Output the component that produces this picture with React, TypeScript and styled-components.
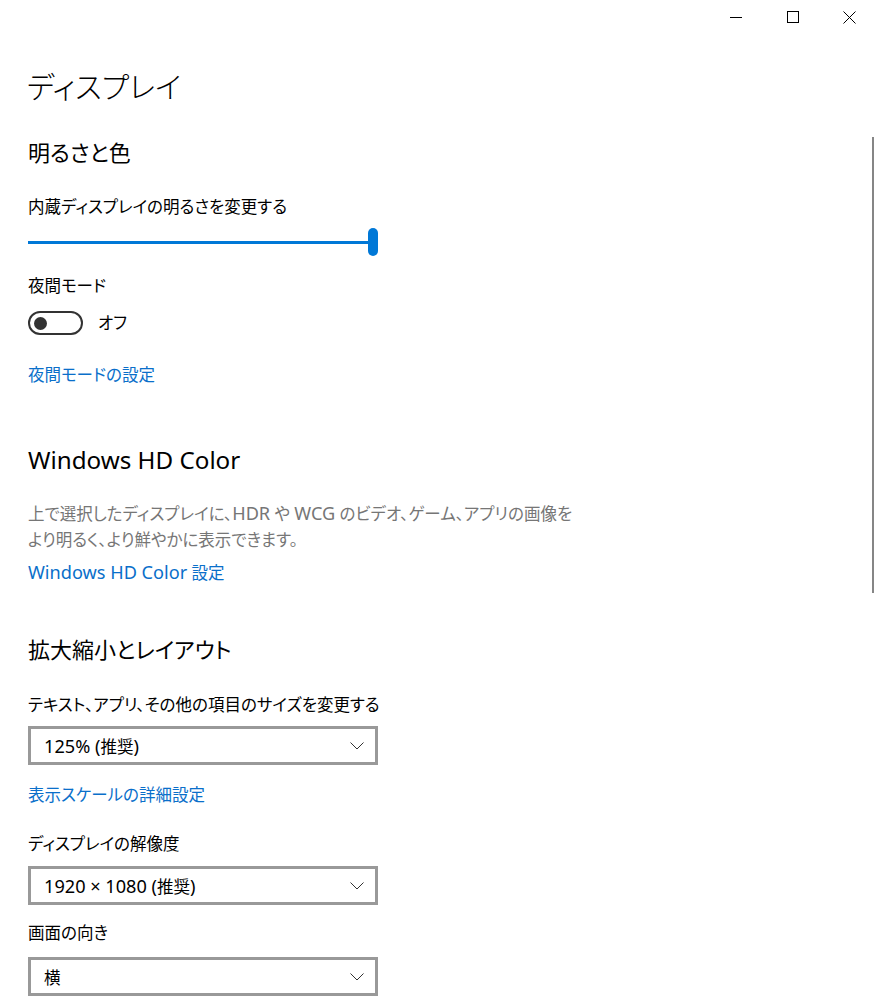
import React, { useState } from 'react';
import styled, { createGlobalStyle } from 'styled-components';

const GlobalStyle = createGlobalStyle`
    html, body {
        margin:0;
        padding:0;
        background:#fff;
    }
    body {
        font-family:"Noto Sans", "Noto Sans CJK JP", sans-serif;
        color:#000;
    }
`

const Window = styled.div`
    position:relative;
    width:875px;
    height:997px;
    overflow:hidden;
    background:#fff;
    font-feature-settings:"palt";
`

const TitleBar = styled.div`
    display:flex;
    justify-content:flex-end;
    height:32px;
    margin-right:-3px;
`

const Caption = styled.div`
    width:57px;
    height:34px;
    display:flex;
    align-items:center;
    justify-content:center;
`

const Content = styled.div`
    display:flex;
    flex-direction:column;
    align-items:flex-start;
    padding-left:28px;
`

// Segoe UI runs are set a little larger than the Japanese face next to them
const Latin = styled.span`
    font-size:1.1em;
`

const PageTitle = styled.h1`
    margin:30px 0 0 -1px;
    font-weight:300;
    font-size:29.5px;
    line-height:46px;
    font-family:"Noto Sans CJK JP", sans-serif;
`

const SectionTitle = styled.h2<{ top: number }>`
    margin:${props => props.top}px 0 0 0;
    font-weight:400;
    font-size:22px;
    line-height:30px;
`

const Label = styled.div<{ top: number }>`
    margin-top:${props => props.top}px;
    font-size:16.5px;
    line-height:24px;
`

const Description = styled.p`
    margin:25px 0 0 0;
    font-size:16.5px;
    line-height:26px;
    color:#767676;
    white-space:nowrap;
`

const Link = styled.a<{ top: number }>`
    margin-top:${props => props.top}px;
    font-size:16.5px;
    line-height:24px;
    color:#0a6fca;
    text-decoration:none;
    cursor:pointer;
`

const SliderRow = styled.div`
    margin-top:9px;
    width:350px;
    height:28px;
    display:flex;
    align-items:center;
`

const Track = styled.div`
    flex:1;
    height:3px;
    background:#0078d7;
`

const Thumb = styled.div`
    width:10px;
    height:28px;
    border-radius:5px;
    background:#0078d7;
`

const ToggleRow = styled.div`
    margin-top:13px;
    display:flex;
    align-items:center;
    gap:15px;
    font-size:16.5px;
    line-height:24px;
`

const Toggle = styled.div<{ on: boolean }>`
    box-sizing:border-box;
    width:55px;
    height:24px;
    border-radius:12px;
    border:2px solid ${props => props.on ? '#0078d7' : '#333'};
    background:${props => props.on ? '#0078d7' : '#fff'};
    display:flex;
    align-items:center;
    justify-content:${props => props.on ? 'flex-end' : 'flex-start'};
    padding:0 4px;
    cursor:pointer;
`

const Knob = styled.div<{ on: boolean }>`
    width:13px;
    height:13px;
    border-radius:50%;
    background:${props => props.on ? '#fff' : '#333'};
`

const Select = styled.div<{ top: number }>`
    box-sizing:border-box;
    margin-top:${props => props.top}px;
    width:350px;
    height:39px;
    border:3px solid #999;
    display:flex;
    align-items:center;
    justify-content:space-between;
    padding:0 11px 0 13px;
    font-size:16.5px;
`

const ScrollIndicator = styled.div`
    position:absolute;
    right:1px;
    top:137px;
    width:2px;
    height:456px;
    background:#868686;
`

const ChevronDown = () => (
    <svg width="14" height="8" viewBox="0 0 14 8">
        <path d="M0.5 0.5 L7 7 L13.5 0.5" fill="none" stroke="#333" strokeWidth="1" />
    </svg>
)

const App = () => {
    const [night, setNight] = useState(false);

    return (
        <Window>
            <GlobalStyle />
            <TitleBar>
                <Caption>
                    <svg width="12" height="12" viewBox="0 0 12 12">
                        <path d="M0 6.5 H12" stroke="#000" strokeWidth="1" />
                    </svg>
                </Caption>
                <Caption>
                    <svg width="12" height="12" viewBox="0 0 12 12">
                        <rect x="0.5" y="0.5" width="11" height="11" fill="none" stroke="#000" strokeWidth="1" />
                    </svg>
                </Caption>
                <Caption>
                    <svg width="13" height="13" viewBox="0 0 13 13">
                        <path d="M0.5 0.5 L12.5 12.5 M12.5 0.5 L0.5 12.5" stroke="#000" strokeWidth="1" />
                    </svg>
                </Caption>
            </TitleBar>
            <Content>
                <PageTitle>ディスプレイ</PageTitle>

                <SectionTitle top={29}>明るさと色</SectionTitle>
                <Label top={28}>内蔵ディスプレイの明るさを変更する</Label>
                <SliderRow>
                    <Track />
                    <Thumb />
                </SliderRow>
                <Label top={18}>夜間モード</Label>
                <ToggleRow>
                    <Toggle on={night} onClick={() => setNight(!night)}>
                        <Knob on={night} />
                    </Toggle>
                    <span>{night ? 'オン' : 'オフ'}</span>
                </ToggleRow>
                <Link top={28}>夜間モードの設定</Link>

                <SectionTitle top={58}><Latin>Windows HD Color</Latin></SectionTitle>
                <Description>
                    上で選択したディスプレイに、<Latin>HDR</Latin> や <Latin>WCG</Latin> のビデオ、ゲーム、アプリの画像を<br />
                    より明るく、より鮮やかに表示できます。
                </Description>
                <Link top={7}><Latin>Windows HD Color</Latin> 設定</Link>

                <SectionTitle top={49}>拡大縮小とレイアウト</SectionTitle>
                <Label top={29}>テキスト、アプリ、その他の項目のサイズを変更する</Label>
                <Select top={9}>
                    <span><Latin>125% (</Latin>推奨<Latin>)</Latin></span>
                    <ChevronDown />
                </Select>
                <Link top={18}>表示スケールの詳細設定</Link>
                <Label top={25}>ディスプレイの解像度</Label>
                <Select top={10}>
                    <span><Latin>1920 × 1080 (</Latin>推奨<Latin>)</Latin></span>
                    <ChevronDown />
                </Select>
                <Label top={16}>画面の向き</Label>
                <Select top={12}>
                    <span>横</span>
                    <ChevronDown />
                </Select>
            </Content>
            <ScrollIndicator />
        </Window>
    )
}

export default App;
